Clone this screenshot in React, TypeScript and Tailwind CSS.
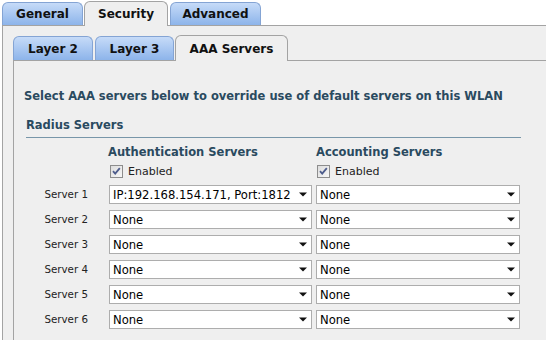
import React from "react";

const SERVERS = [
  { n: 1, auth: "IP:192.168.154.171, Port:1812", acct: "None" },
  { n: 2, auth: "None", acct: "None" },
  { n: 3, auth: "None", acct: "None" },
  { n: 4, auth: "None", acct: "None" },
  { n: 5, auth: "None", acct: "None" },
  { n: 6, auth: "None", acct: "None" },
];

function Tab({ label, active, className }: { label: string; active?: boolean; className: string }) {
  if (active) {
    return (
      <div
        className={`relative z-10 -mb-px flex items-center justify-center rounded-t-[6px] border border-b-0 border-[#a3a3a3] bg-[#efefef] text-[12px] font-bold text-[#111] ${className}`}
      >
        {label}
      </div>
    );
  }
  return (
    <div
      className={`flex items-center justify-center rounded-t-[6px] border border-b-0 border-[#84a4d4] bg-gradient-to-b from-[#c6dbf8] to-[#8db4ea] text-[12px] font-bold text-[#111] ${className}`}
    >
      {label}
    </div>
  );
}

function Select({ value, className }: { value: string; className: string }) {
  return (
    <div className={`flex h-[19px] items-center border border-[#adadad] bg-white pl-[3px] pr-[4px] ${className}`}>
      <span className="flex-1 whitespace-nowrap text-[11.6px] leading-[14px] text-black">{value}</span>
      <svg width="8" height="5" viewBox="0 0 8 5" className="ml-[2px] shrink-0">
        <path d="M0 0.5H8L4 4.5Z" fill="#111" />
      </svg>
    </div>
  );
}

function Check({ label }: { label: string }) {
  return (
    <div className="flex h-[13px] items-center gap-[5px]">
      <svg width="13" height="13" viewBox="0 0 13 13">
        <defs>
          <linearGradient id="cb" x1="0" y1="0" x2="1" y2="1">
            <stop offset="0" stopColor="#dcdcdc" />
            <stop offset="1" stopColor="#f8f8f8" />
          </linearGradient>
        </defs>
        <rect x="0.5" y="0.5" width="12" height="12" fill="url(#cb)" stroke="#8d8d8d" />
        <path d="M3 6.2L5.2 8.6L9.8 3.2" fill="none" stroke="#4d5c8c" strokeWidth="1.8" />
      </svg>
      <span className="text-[11px] leading-[13px] text-[#222]">{label}</span>
    </div>
  );
}

export default function App() {
  return (
    <div className="h-[340px] w-[546px] overflow-hidden bg-white font-['DejaVu_Sans',sans-serif]">
      {/* outer tabs */}
      <div className="flex h-[25px] items-end pl-[2px]">
        <Tab label="General" className="h-[23px] w-[81px]" />
        <Tab label="Security" active className="ml-px h-[25px] w-[84px]" />
        <Tab label="Advanced" className="ml-[2px] h-[23px] w-[91px]" />
      </div>

      <div className="ml-[2px] h-[400px] border-l border-t border-[#a3a3a3] bg-[#efefef] pl-[10px] pt-[10px]">
        {/* inner tabs */}
        <div className="flex h-[24px] items-end">
          <Tab label="Layer 2" className="h-[24px] w-[80px]" />
          <Tab label="Layer 3" className="ml-[2px] h-[24px] w-[79px]" />
          <Tab label="AAA Servers" active className="ml-px h-[26px] w-[113px]" />
        </div>

        <div className="h-[400px] border-l border-t border-[#a3a3a3] pt-[29px]">
          <p className="pl-[10px] text-[11.5px] font-bold leading-[13px] text-[#2a4a5f]">
            Select AAA servers below to override use of default servers on this WLAN
          </p>

          <div className="ml-[12px] w-[495px] mt-[16px] border-b border-[#7896a9] pb-[5px]">
            <p className="text-[11.5px] font-bold leading-[13px] text-[#2a4a5f]">Radius Servers</p>
          </div>

          <div className="mt-[8px] flex flex-col">
            <div className="flex text-[11.5px] font-bold leading-[13px] text-[#2a4a5f]">
              <p className="ml-[94px] w-[208px]">Authentication Servers</p>
              <p>Accounting Servers</p>
            </div>
            <div className="mt-[6px] flex">
              <div className="ml-[96px] w-[207px]">
                <Check label="Enabled" />
              </div>
              <Check label="Enabled" />
            </div>
            <div className="mt-[7px] flex flex-col gap-[6px]">
              {SERVERS.map((s) => (
                <div key={s.n} className="flex items-center">
                  <span className="w-[75px] pr-px text-right text-[10.3px] leading-[13px] text-[#222]">Server {s.n}</span>
                  <Select value={s.auth} className="ml-[20px] w-[203px]" />
                  <Select value={s.acct} className="ml-[4px] w-[204px]" />
                </div>
              ))}
            </div>
          </div>
        </div>
      </div>
    </div>
  );
}
